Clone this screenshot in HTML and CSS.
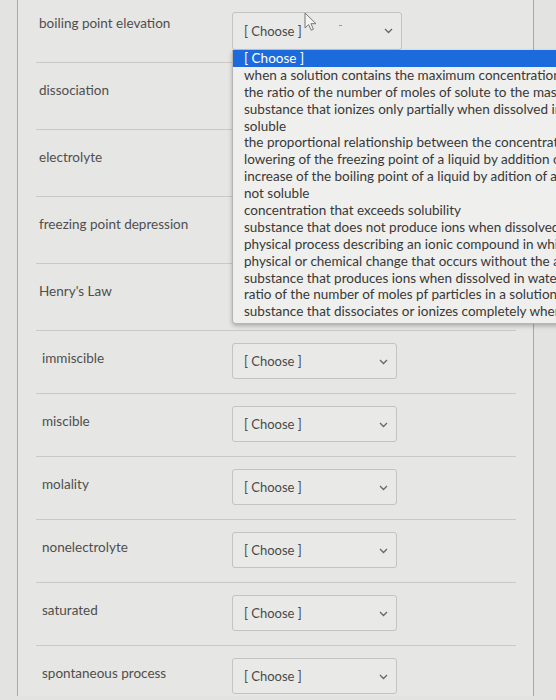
FILE: index.html
```html
<!DOCTYPE html>
<html>
<head>
<meta charset="utf-8">
<link rel="stylesheet" href="styles.css">
</head>
<body>
<div class="frame">
  <div class="rows">
    <div class="row row-tall row-first">
      <div class="label">boiling point elevation</div>
      <div class="select-wrap">
        <div class="select open"><span>[ Choose ]</span><svg class="chev" width="9" height="6" viewBox="0 0 9 6"><path d="M1 1l3.5 3.5L8 1" fill="none" stroke="#666" stroke-width="1.3"/></svg></div>
        <svg class="cursor" width="13" height="19" viewBox="0 0 13 19"><path d="M1 1v15l3.6-3.4 2.6 5.6 2.3-1-2.6-5.5H12z" fill="#f4f4f4" stroke="#777" stroke-width="1"/></svg>
        <span class="dash"></span>
        <ul class="options">
          <li class="active">[ Choose ]</li>
          <li>when a solution contains the maximum concentration of solute</li>
          <li>the ratio of the number of moles of solute to the mass of solvent</li>
          <li>substance that ionizes only partially when dissolved in water</li>
          <li>soluble</li>
          <li>the proportional relationship between the concentration of a gas</li>
          <li>lowering of the freezing point of a liquid by addition of a solute</li>
          <li>increase of the boiling point of a liquid by adition of a solute</li>
          <li>not soluble</li>
          <li>concentration that exceeds solubility</li>
          <li>substance that does not produce ions when dissolved in water</li>
          <li>physical process describing an ionic compound in which ions separate</li>
          <li>physical or chemical change that occurs without the addition of energy</li>
          <li>substance that produces ions when dissolved in water</li>
          <li>ratio of the number of moles pf particles in a solution to moles of solute</li>
          <li>substance that dissociates or ionizes completely when dissolved</li>
        </ul>
      </div>
    </div>
    <div class="row row-tall">
      <div class="label">dissociation</div>
      <div class="select"><span>[ Choose ]</span><svg class="chev" width="9" height="6" viewBox="0 0 9 6"><path d="M1 1l3.5 3.5L8 1" fill="none" stroke="#666" stroke-width="1.3"/></svg></div>
    </div>
    <div class="row row-tall">
      <div class="label">electrolyte</div>
      <div class="select"><span>[ Choose ]</span><svg class="chev" width="9" height="6" viewBox="0 0 9 6"><path d="M1 1l3.5 3.5L8 1" fill="none" stroke="#666" stroke-width="1.3"/></svg></div>
    </div>
    <div class="row row-tall">
      <div class="label">freezing point depression</div>
      <div class="select"><span>[ Choose ]</span><svg class="chev" width="9" height="6" viewBox="0 0 9 6"><path d="M1 1l3.5 3.5L8 1" fill="none" stroke="#666" stroke-width="1.3"/></svg></div>
    </div>
    <div class="row row-tall">
      <div class="label">Henry's Law</div>
      <div class="select"><span>[ Choose ]</span><svg class="chev" width="9" height="6" viewBox="0 0 9 6"><path d="M1 1l3.5 3.5L8 1" fill="none" stroke="#666" stroke-width="1.3"/></svg></div>
    </div>
    <div class="row">
      <div class="label">immiscible</div>
      <div class="select"><span>[ Choose ]</span><svg class="chev" width="9" height="6" viewBox="0 0 9 6"><path d="M1 1l3.5 3.5L8 1" fill="none" stroke="#666" stroke-width="1.3"/></svg></div>
    </div>
    <div class="row">
      <div class="label">miscible</div>
      <div class="select"><span>[ Choose ]</span><svg class="chev" width="9" height="6" viewBox="0 0 9 6"><path d="M1 1l3.5 3.5L8 1" fill="none" stroke="#666" stroke-width="1.3"/></svg></div>
    </div>
    <div class="row">
      <div class="label">molality</div>
      <div class="select"><span>[ Choose ]</span><svg class="chev" width="9" height="6" viewBox="0 0 9 6"><path d="M1 1l3.5 3.5L8 1" fill="none" stroke="#666" stroke-width="1.3"/></svg></div>
    </div>
    <div class="row">
      <div class="label">nonelectrolyte</div>
      <div class="select"><span>[ Choose ]</span><svg class="chev" width="9" height="6" viewBox="0 0 9 6"><path d="M1 1l3.5 3.5L8 1" fill="none" stroke="#666" stroke-width="1.3"/></svg></div>
    </div>
    <div class="row">
      <div class="label">saturated</div>
      <div class="select"><span>[ Choose ]</span><svg class="chev" width="9" height="6" viewBox="0 0 9 6"><path d="M1 1l3.5 3.5L8 1" fill="none" stroke="#666" stroke-width="1.3"/></svg></div>
    </div>
    <div class="row">
      <div class="label">spontaneous process</div>
      <div class="select"><span>[ Choose ]</span><svg class="chev" width="9" height="6" viewBox="0 0 9 6"><path d="M1 1l3.5 3.5L8 1" fill="none" stroke="#666" stroke-width="1.3"/></svg></div>
    </div>
  </div>
</div>
</body>
</html>
```
FILE: styles.css
```css
html, body {
  margin: 0;
  padding: 0;
  height: 700px;
  overflow: hidden;
}
body {
  background: #e3e3e1;
  font-family: Lato, "Open Sans", sans-serif;
  color: #505050;
}
.frame {
  margin-left: 17px;
  width: 515px;
  height: 700px;
  border-left: 1px solid #a9a9a9;
  border-right: 1px solid #a9a9a9;
  background: #e6e6e4;
}
.rows {
  padding: 0 17px 0 18px;
  margin-top: -4px;
}
.row {
  display: flex;
  height: 62px;
  border-bottom: 1px solid #c9c9c7;
}
.row-tall {
  height: 66px;
}
.label {
  width: 196px;
  padding-left: 3px;
  box-sizing: border-box;
  padding-top: 17px;
  font-size: 13.5px;
  line-height: 20px;
  color: #4e4e4e;
}
.row:not(.row-tall) .label {
  padding-left: 6px;
}
.select-wrap {
  position: relative;
}
.select {
  position: relative;
  margin-top: 15px;
  width: 168px;
  height: 37px;
  box-sizing: border-box;
  border: 1px solid #c3c3c1;
  border-radius: 3px;
  background: #e9e9e7;
  display: flex;
  align-items: center;
  padding-left: 11px;
  font-size: 13px;
  color: #4a4a4a;
}
.select.open {
  margin-top: 16px;
  width: 170px;
  height: 38px;
}
.row:not(.row-tall) .select {
  margin-top: 12px;
  width: 165px;
  height: 36px;
}
.chev {
  position: absolute;
  right: 8px;
  top: 15px;
}
.cursor {
  position: absolute;
  left: 72px;
  top: 16px;
}
.dash {
  position: absolute;
  left: 107px;
  top: 29px;
  width: 3px;
  height: 1px;
  background: #999;
}
.options {
  position: absolute;
  left: 0;
  top: 54px;
  margin: 0;
  padding: 0 0 3px 0;
  list-style: none;
  width: 420px;
  background: #efefed;
  border: 1px solid #b5b5b5;
  border-top: none;
  border-radius: 0 0 4px 4px;
  box-shadow: 0 2px 4px rgba(0, 0, 0, 0.25);
  z-index: 5;
}
.options li {
  padding-left: 11px;
  font-size: 13.5px;
  line-height: 16.9px;
  height: 16.9px;
  white-space: nowrap;
  color: #383838;
}
.options li.active {
  background: #1b6bdc;
  color: #ffffff;
}
```
